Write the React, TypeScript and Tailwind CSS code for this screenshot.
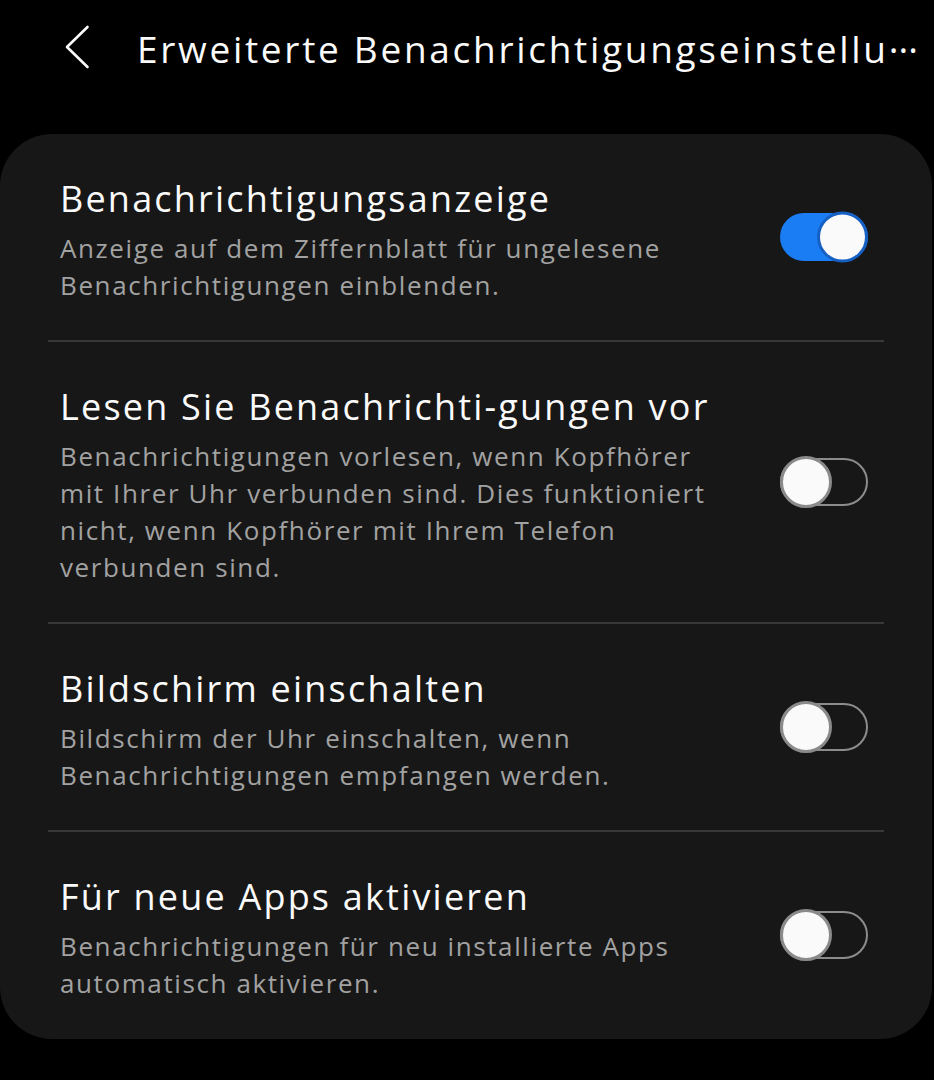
import React from "react";

type Setting = {
  title: string;
  lines: string[];
  on: boolean;
};

const settings: Setting[] = [
  {
    title: "Benachrichtigungsanzeige",
    lines: [
      "Anzeige auf dem Ziffernblatt für ungelesene",
      "Benachrichtigungen einblenden.",
    ],
    on: true,
  },
  {
    title: "Lesen Sie Benachrichti-gungen vor",
    lines: [
      "Benachrichtigungen vorlesen, wenn Kopfhörer",
      "mit Ihrer Uhr verbunden sind. Dies funktioniert",
      "nicht, wenn Kopfhörer mit Ihrem Telefon",
      "verbunden sind.",
    ],
    on: false,
  },
  {
    title: "Bildschirm einschalten",
    lines: [
      "Bildschirm der Uhr einschalten, wenn",
      "Benachrichtigungen empfangen werden.",
    ],
    on: false,
  },
  {
    title: "Für neue Apps aktivieren",
    lines: [
      "Benachrichtigungen für neu installierte Apps",
      "automatisch aktivieren.",
    ],
    on: false,
  },
];

const Toggle = ({ on }: { on: boolean }) => {
  if (on) {
    return (
      <div className="relative w-[88px] h-[48px] rounded-full bg-[#1a7df4] shrink-0 mb-[8px]">
        <div className="absolute right-0 top-1/2 -translate-y-1/2 w-[51px] h-[51px] rounded-full bg-[#fafafa] border-[3px] border-[#1660c4]" />
      </div>
    );
  }
  return (
    <div className="relative w-[88px] h-[48px] rounded-full border-[2px] border-[#8c8c8c] shrink-0 mb-[8px]">
      <div className="absolute left-[-2px] top-1/2 -translate-y-1/2 w-[52px] h-[52px] rounded-full bg-[#fafafa] border-[3px] border-[#8a8a8a]" />
    </div>
  );
};

const SettingRow = ({ item, last }: { item: Setting; last: boolean }) => {
  return (
    <div
      className={`flex items-center justify-between pl-[60px] pr-[64px] pt-[43px] ${
        last ? "pb-[37px]" : "pb-[36px]"
      }`}
    >
      <div className="flex flex-col">
        <p className="text-[36px] leading-[44px] tracking-[2.2px] text-[#fafafa] whitespace-nowrap">
          {item.title}
        </p>
        <div className="mt-[9px] text-[26px] leading-[37px] tracking-[1.6px] text-[#a2a2a2]">
          {item.lines.map((line) => (
            <p key={line} className="whitespace-nowrap">
              {line}
            </p>
          ))}
        </div>
      </div>
      <Toggle on={item.on} />
    </div>
  );
};

export default function App() {
  return (
    <div
      className="w-full min-h-[1080px] bg-black pt-[25px] pb-[40px]"
      style={{ fontFamily: '"Open Sans", "DejaVu Sans", sans-serif' }}
    >
      <div className="flex items-center h-[48px] pl-[64px]">
        <svg width="26" height="44" viewBox="0 0 26 44" className="shrink-0 -mt-[4px]">
          <polyline
            points="23.5,2 3,22 23.5,42"
            fill="none"
            stroke="#fafafa"
            strokeWidth="2.6"
            strokeLinecap="round"
            strokeLinejoin="round"
          />
        </svg>
        <h1 className="ml-[47px] text-[37px] leading-[48px] tracking-[2.7px] text-[#fafafa] whitespace-nowrap">
          Erweiterte Benachrichtigungseinstellu
          <span className="tracking-[0px]">···</span>
        </h1>
      </div>

      <div className="mt-[61px] mr-[2px] rounded-[52px] bg-[#171717]">
        {settings.map((item, i) => (
          <div key={item.title}>
            {i > 0 && <div className="mx-[48px] h-[2px] bg-[#383838]" />}
            <SettingRow item={item} last={i === settings.length - 1} />
          </div>
        ))}
      </div>
    </div>
  );
}
